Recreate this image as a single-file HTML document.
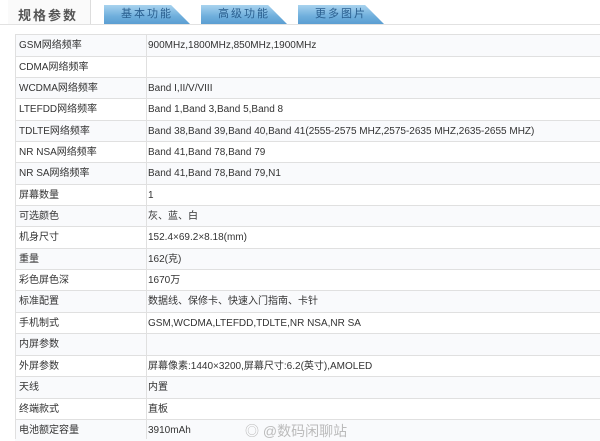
<!DOCTYPE html>
<html><head><meta charset="utf-8"><style>
body{margin:0;width:600px;height:439px;overflow:hidden;background:#fff;font-family:"Liberation Sans","Noto Sans CJK SC",sans-serif;position:relative}
.t0{position:absolute;left:8px;top:0;width:82px;height:24px;background:#fafafa;border-right:1px solid #ddd}
.t0 span{position:absolute;left:10px;top:5px;font-size:13px;color:#555;font-weight:bold;letter-spacing:2px}
.tb{position:absolute;top:5px;height:19px;width:86px;background:linear-gradient(#a9d3ef,#6eaedc 60%,#5b9ed2);clip-path:polygon(0 0,78% 0,100% 100%,0 100%);font-size:11px;color:#2a5f8f;text-align:center;line-height:19px;letter-spacing:2px}
.line{position:absolute;left:0;right:0;top:24px;height:1px;background:#e2e2e2}
.r{position:absolute;left:15px;width:600px;border-top:1px solid #e0e0e0;font-size:10px;color:#333;height:21px;line-height:21px}
.r.a{background:#f9fafc}
.r b{font-weight:normal;position:absolute;left:4px}
.r i{font-style:normal;position:absolute;left:133px}
.v{position:absolute;left:146px;top:34px;bottom:0;width:1px;background:#e0e0e0}
.lft{position:absolute;left:15px;top:34px;bottom:0;width:1px;background:#e0e0e0}
.wm{position:absolute;left:245px;top:421px;font-size:14px;color:#bbb}
</style></head><body>
<div class="t0"><span>规格参数</span></div>
<div class="tb" style="left:104px">基本功能</div>
<div class="tb" style="left:201px">高级功能</div>
<div class="tb" style="left:298px">更多图片</div>
<div class="line"></div>
<div class="r a" style="top:34px"><b>GSM网络频率</b><i>900MHz,1800MHz,850MHz,1900MHz</i></div>
<div class="r" style="top:56px"><b>CDMA网络频率</b><i></i></div>
<div class="r a" style="top:77px"><b>WCDMA网络频率</b><i>Band I,II/V/VIII</i></div>
<div class="r" style="top:98px"><b>LTEFDD网络频率</b><i>Band 1,Band 3,Band 5,Band 8</i></div>
<div class="r a" style="top:120px"><b>TDLTE网络频率</b><i>Band 38,Band 39,Band 40,Band 41(2555-2575 MHZ,2575-2635 MHZ,2635-2655 MHZ)</i></div>
<div class="r" style="top:141px"><b>NR NSA网络频率</b><i>Band 41,Band 78,Band 79</i></div>
<div class="r a" style="top:162px"><b>NR SA网络频率</b><i>Band 41,Band 78,Band 79,N1</i></div>
<div class="r" style="top:184px"><b>屏幕数量</b><i>1</i></div>
<div class="r a" style="top:205px"><b>可选颜色</b><i>灰、蓝、白</i></div>
<div class="r" style="top:226px"><b>机身尺寸</b><i>152.4×69.2×8.18(mm)</i></div>
<div class="r a" style="top:248px"><b>重量</b><i>162(克)</i></div>
<div class="r" style="top:269px"><b>彩色屏色深</b><i>1670万</i></div>
<div class="r a" style="top:290px"><b>标准配置</b><i>数据线、保修卡、快速入门指南、卡针</i></div>
<div class="r" style="top:312px"><b>手机制式</b><i>GSM,WCDMA,LTEFDD,TDLTE,NR NSA,NR SA</i></div>
<div class="r a" style="top:333px"><b>内屏参数</b><i></i></div>
<div class="r" style="top:355px"><b>外屏参数</b><i>屏幕像素:1440×3200,屏幕尺寸:6.2(英寸),AMOLED</i></div>
<div class="r a" style="top:376px"><b>天线</b><i>内置</i></div>
<div class="r" style="top:398px"><b>终端款式</b><i>直板</i></div>
<div class="r a" style="top:419px"><b>电池额定容量</b><i>3910mAh</i></div>
<div class="v"></div><div class="lft"></div>
<div class="wm">◎ @数码闲聊站</div>
</body></html>
